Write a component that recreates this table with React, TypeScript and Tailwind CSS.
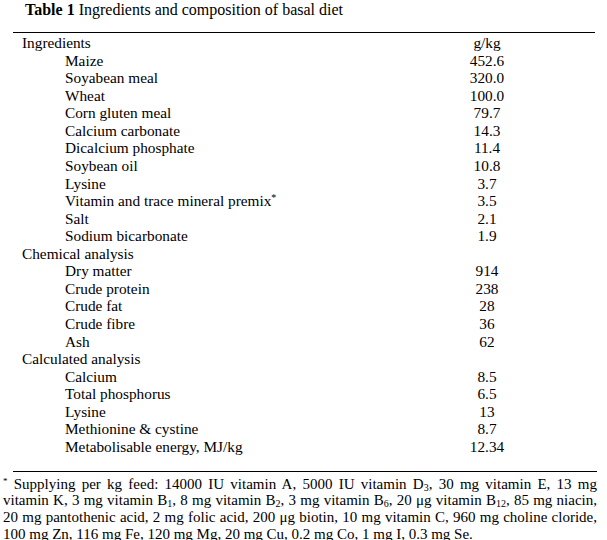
import React from "react";

type Row = { label: React.ReactNode; value?: string; indent?: boolean };

const rows: Row[] = [
  { label: "Ingredients", value: "g/kg" },
  { label: "Maize", value: "452.6", indent: true },
  { label: "Soyabean meal", value: "320.0", indent: true },
  { label: "Wheat", value: "100.0", indent: true },
  { label: "Corn gluten meal", value: "79.7", indent: true },
  { label: "Calcium carbonate", value: "14.3", indent: true },
  { label: "Dicalcium phosphate", value: "11.4", indent: true },
  { label: "Soybean oil", value: "10.8", indent: true },
  { label: "Lysine", value: "3.7", indent: true },
  {
    label: (
      <>
        Vitamin and trace mineral premix
        <span className="text-[10px] leading-none relative -top-[5px]">*</span>
      </>
    ),
    value: "3.5",
    indent: true,
  },
  { label: "Salt", value: "2.1", indent: true },
  { label: "Sodium bicarbonate", value: "1.9", indent: true },
  { label: "Chemical analysis" },
  { label: "Dry matter", value: "914", indent: true },
  { label: "Crude protein", value: "238", indent: true },
  { label: "Crude fat", value: "28", indent: true },
  { label: "Crude fibre", value: "36", indent: true },
  { label: "Ash", value: "62", indent: true },
  { label: "Calculated analysis" },
  { label: "Calcium", value: "8.5", indent: true },
  { label: "Total phosphorus", value: "6.5", indent: true },
  { label: "Lysine", value: "13", indent: true },
  { label: "Methionine & cystine", value: "8.7", indent: true },
  { label: "Metabolisable energy, MJ/kg", value: "12.34", indent: true },
];

const Sub = ({ children }: { children: React.ReactNode }) => (
  <span className="text-[10px] leading-none relative top-[2px]">{children}</span>
);

export default function App() {
  return (
    <div className="w-[607px] h-[540px] bg-white text-black overflow-hidden font-['Liberation_Serif',serif] flex flex-col">
      <div className="pt-[1px] pl-[25px] text-[16px] leading-[18px]">
        <span className="font-bold">Table 1</span> Ingredients and composition of basal diet
      </div>
      <div className="mt-[13px] ml-[13px] w-[582px] border-t border-black pt-[1px] flex flex-col">
        {rows.map((r, i) => (
          <div key={i} className="flex text-[15.3px] leading-[17.57px] h-[17.57px]">
            <div className={`flex-1 whitespace-nowrap ${r.indent ? "pl-[52px]" : "pl-[9px]"}`}>
              {r.label}
            </div>
            <div className="w-[100px] text-center mr-[58px]">{r.value ?? ""}</div>
          </div>
        ))}
      </div>
      <div className="mt-[15px] ml-[13px] w-[584px] border-t border-black" />
      <div className="mt-[4px] ml-[3px] w-[594px] text-[15px] leading-[16.8px] text-justify">
        <span className="text-[9px] leading-none relative -top-[5px]">*</span> Supplying per kg feed: 14000 IU
        vitamin A, 5000 IU vitamin D<Sub>3</Sub>, 30 mg vitamin E, 13 mg vitamin K, 3 mg vitamin B<Sub>1</Sub>, 8
        mg vitamin B<Sub>2</Sub>, 3 mg vitamin B<Sub>6</Sub>, 20 μg vitamin B<Sub>12</Sub>, 85 mg niacin, 20 mg
        pantothenic acid, 2 mg folic acid, 200 μg biotin, 10 mg vitamin C, 960 mg choline cloride, 100 mg Zn, 116
        mg Fe, 120 mg Mg, 20 mg Cu, 0.2 mg Co, 1 mg I, 0.3 mg Se.
      </div>
    </div>
  );
}
